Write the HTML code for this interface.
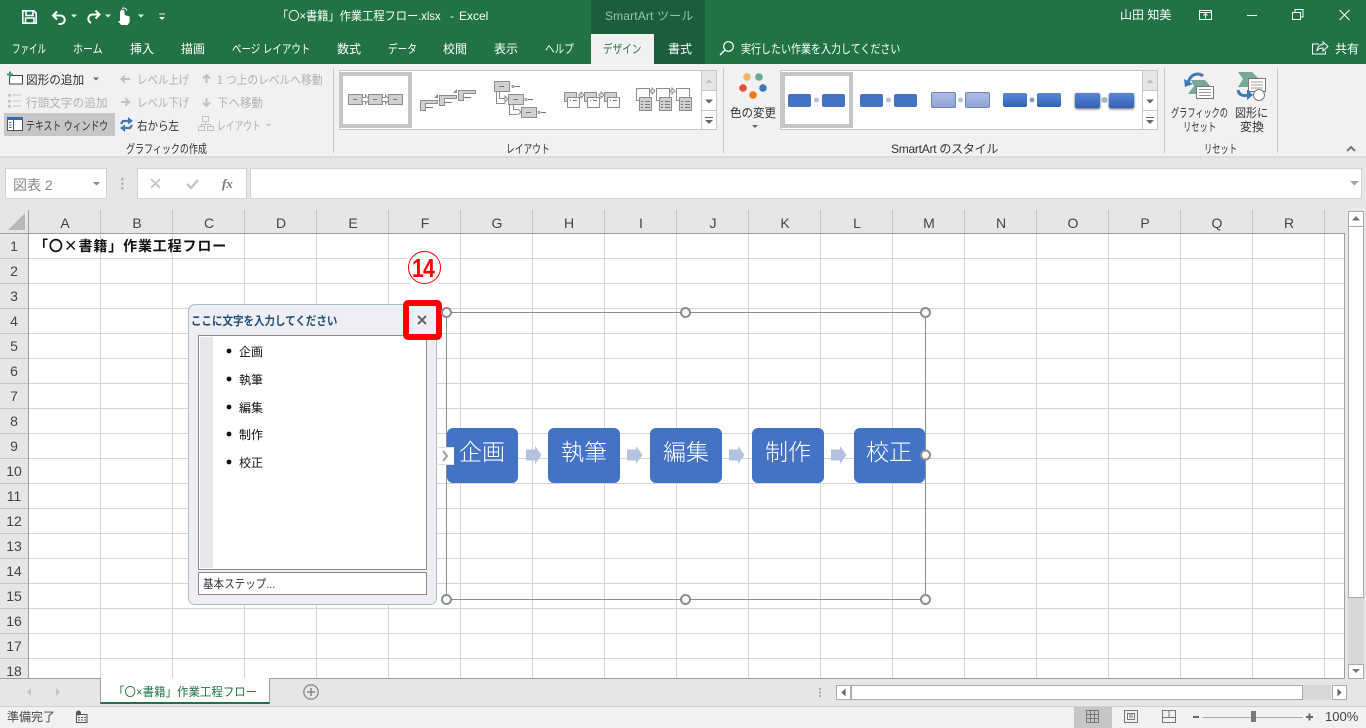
<!DOCTYPE html>
<html lang="ja"><head><meta charset="utf-8"><title>Excel</title>
<style>
html,body{margin:0;padding:0;width:1366px;height:728px;overflow:hidden;background:#e6e6e6}
body{position:relative;font-family:"Liberation Sans","Noto Sans CJK JP",sans-serif;color:#444}
.b{position:absolute;box-sizing:border-box}
.t{position:absolute;white-space:nowrap;line-height:16px;height:16px;font-size:12px;letter-spacing:0;transform-origin:0 50%}
.w{color:#fff}.g{color:#b1b1b1}.k{color:#333}
.c{transform:translateX(-50%)}
.h{position:absolute;top:213px;font-size:14px;line-height:20px;color:#444;transform:translateX(-50%)}
.r{position:absolute;left:0;width:28px;text-align:center;font-size:14px;line-height:20px;color:#444}
svg{position:absolute;left:0;top:0}
</style></head><body>

<!-- title bar / tabs -->
<div class="b" style="left:0;top:0;width:1366px;height:64px;background:#217346"></div>
<div class="b" style="left:591px;top:0;width:114px;height:64px;background:#1b5e39"></div>
<div class="b" style="left:591px;top:34px;width:63px;height:30px;background:#f1f1f1"></div>
<!-- ribbon -->
<div class="b" style="left:0;top:64px;width:1366px;height:94px;background:#f1f1f1;border-bottom:2px solid #dcdcdc"></div>
<div class="b" style="left:333px;top:68px;width:1px;height:85px;background:#c8c8c8"></div>
<div class="b" style="left:723px;top:68px;width:1px;height:85px;background:#c8c8c8"></div>
<div class="b" style="left:1164px;top:68px;width:1px;height:85px;background:#c8c8c8"></div>
<div class="b" style="left:1277px;top:68px;width:1px;height:85px;background:#c8c8c8"></div>
<div class="b" style="left:4px;top:113px;width:111px;height:23px;background:#c6c6c6"></div>
<!-- galleries -->
<div class="b" style="left:339px;top:70px;width:378px;height:60px;background:#fff;border:1px solid #c6c6c6"></div>
<div class="b" style="left:339px;top:72px;width:73px;height:56px;border:4px solid #c6c6c6"></div>
<div class="b" style="left:701px;top:70px;width:16px;height:60px;background:#fff;border:1px solid #c6c6c6"></div>
<div class="b" style="left:702px;top:71px;width:14px;height:20px;background:#e6e6e6;border-bottom:1px solid #c6c6c6"></div>
<div class="b" style="left:702px;top:110px;width:14px;height:1px;background:#c6c6c6"></div>
<div class="b" style="left:780px;top:70px;width:378px;height:60px;background:#fff;border:1px solid #c6c6c6"></div>
<div class="b" style="left:781px;top:72px;width:72px;height:56px;border:4px solid #c6c6c6"></div>
<div class="b" style="left:1142px;top:70px;width:16px;height:60px;background:#fff;border:1px solid #c6c6c6"></div>
<div class="b" style="left:1143px;top:71px;width:14px;height:20px;background:#e6e6e6;border-bottom:1px solid #c6c6c6"></div>
<div class="b" style="left:1143px;top:110px;width:14px;height:1px;background:#c6c6c6"></div>

<!-- formula bar -->
<div class="b" style="left:5px;top:168px;width:102px;height:31px;background:#fff;border:1px solid #d4d4d4"></div>
<div class="b" style="left:137px;top:168px;width:110px;height:31px;background:#fff;border:1px solid #d4d4d4"></div>
<div class="b" style="left:250px;top:168px;width:1112px;height:31px;background:#fff;border:1px solid #d4d4d4"></div>

<!-- sheet -->
<div class="b" style="left:29px;top:234px;width:1316px;height:445px;background-color:#fff;background-image:linear-gradient(to right,transparent 71px,#d4d4d4 71px),linear-gradient(to bottom,transparent 24px,#d4d4d4 24px);background-size:72px 25px"></div>
<div class="b" style="left:0;top:234px;width:29px;height:445px;background-image:linear-gradient(to bottom,transparent 24px,#c4c4c4 24px);background-size:29px 25px"></div>
<div class="b" style="left:29px;top:210px;width:1316px;height:23px;background-image:linear-gradient(to right,transparent 71px,#c4c4c4 71px);background-size:72px 23px"></div>
<div class="b" style="left:0;top:233px;width:1345px;height:1px;background:#9e9e9e"></div>
<div class="b" style="left:28px;top:210px;width:1px;height:469px;background:#9e9e9e"></div>
<div class="b" style="left:1344px;top:233px;width:1px;height:446px;background:#9e9e9e"></div>
<div class="b" style="left:0;top:678px;width:1345px;height:1px;background:#9e9e9e"></div>

<span class="h" style="left:65px">A</span><span class="h" style="left:137px">B</span><span class="h" style="left:209px">C</span><span class="h" style="left:281px">D</span><span class="h" style="left:353px">E</span><span class="h" style="left:425px">F</span><span class="h" style="left:497px">G</span><span class="h" style="left:569px">H</span><span class="h" style="left:641px">I</span><span class="h" style="left:713px">J</span><span class="h" style="left:785px">K</span><span class="h" style="left:857px">L</span><span class="h" style="left:929px">M</span><span class="h" style="left:1001px">N</span><span class="h" style="left:1073px">O</span><span class="h" style="left:1145px">P</span><span class="h" style="left:1217px">Q</span><span class="h" style="left:1289px">R</span>

<span class="r" style="top:236px">1</span><span class="r" style="top:261px">2</span><span class="r" style="top:286px">3</span><span class="r" style="top:311px">4</span><span class="r" style="top:336px">5</span><span class="r" style="top:361px">6</span><span class="r" style="top:386px">7</span><span class="r" style="top:411px">8</span><span class="r" style="top:436px">9</span><span class="r" style="top:461px">10</span><span class="r" style="top:486px">11</span><span class="r" style="top:511px">12</span><span class="r" style="top:536px">13</span><span class="r" style="top:561px">14</span><span class="r" style="top:586px">15</span><span class="r" style="top:611px">16</span><span class="r" style="top:636px">17</span><span class="r" style="top:661px">18</span>

<span class="t" style="left:34px;top:238px;font-size:14px;font-weight:700;color:#111;letter-spacing:.85px;font-family:'Noto Sans CJK JP',sans-serif">「〇×書籍」作業工程フロー</span>

<!-- smartart -->
<div class="b" style="left:446px;top:312px;width:480px;height:288px;border:1px solid #8e8e8e"></div>
<div class="b" style="left:447px;top:428px;width:71px;height:55px;background:#4472c4;border-radius:6px"></div>
<div class="b" style="left:548px;top:428px;width:72px;height:55px;background:#4472c4;border-radius:6px"></div>
<div class="b" style="left:650px;top:428px;width:72px;height:55px;background:#4472c4;border-radius:6px"></div>
<div class="b" style="left:752px;top:428px;width:72px;height:55px;background:#4472c4;border-radius:6px"></div>
<div class="b" style="left:854px;top:428px;width:71px;height:55px;background:#4472c4;border-radius:6px"></div>
<span class="t w c" style="left:482px;top:438px;font-size:23px;line-height:28px;height:28px;font-weight:300">企画</span>
<span class="t w c" style="left:584px;top:438px;font-size:23px;line-height:28px;height:28px;font-weight:300">執筆</span>
<span class="t w c" style="left:686px;top:438px;font-size:23px;line-height:28px;height:28px;font-weight:300">編集</span>
<span class="t w c" style="left:788px;top:438px;font-size:23px;line-height:28px;height:28px;font-weight:300">制作</span>
<span class="t w c" style="left:889px;top:438px;font-size:23px;line-height:28px;height:28px;font-weight:300">校正</span>

<!-- text pane -->
<div class="b" style="left:188px;top:304px;width:249px;height:301px;background:#eeeef4;border:1px solid #a9bfc2;border-radius:7px"></div>
<div class="b" style="left:198px;top:335px;width:229px;height:235px;background:#fff;border:1px solid #8a8a8a"></div>
<div class="b" style="left:200px;top:337px;width:13px;height:231px;background:#e8e8e8"></div>
<div class="b" style="left:198px;top:572px;width:229px;height:23px;background:#fff;border:1px solid #8a8a8a"></div>
<span class="t" style="left:191px;top:313px;font-weight:700;color:#1f4e79;transform:scaleX(.875)">ここに文字を入力してください</span>
<span class="t" style="left:239px;top:344px;color:#111">企画</span>
<span class="t" style="left:239px;top:372px;color:#111">執筆</span>
<span class="t" style="left:239px;top:400px;color:#111">編集</span>
<span class="t" style="left:239px;top:427px;color:#111">制作</span>
<span class="t" style="left:239px;top:455px;color:#111">校正</span>
<span class="t" style="left:203px;top:576px;color:#333;transform:scaleX(.88)">基本ステップ...</span>

<!-- annotation -->
<div class="b" style="left:403px;top:300px;width:39px;height:40px;border:6px solid #f00;border-radius:5px;background:#eeeef4"></div>
<div class="b" style="left:404px;top:248px;width:41px;height:41px;border-radius:50%;background:#fff"></div>
<div class="b" style="left:408px;top:251px;width:33px;height:33px;border-radius:50%;border:1px solid #f00"></div>
<span class="t" style="left:412px;top:254px;height:28px;line-height:28px;font-size:26px;font-weight:700;color:#f00;letter-spacing:-1px;transform:scaleX(.82)">14</span>

<!-- scroll bars -->
<div class="b" style="left:1348px;top:211px;width:16px;height:16px;background:#fff;border:1px solid #ababab"></div>
<div class="b" style="left:1348px;top:227px;width:16px;height:371px;background:#fff;border:1px solid #ababab;border-top:0"></div>
<div class="b" style="left:1348px;top:598px;width:16px;height:66px;background:#d8d8d8"></div>
<div class="b" style="left:1348px;top:664px;width:16px;height:15px;background:#fff;border:1px solid #ababab"></div>

<!-- sheet tabs -->
<div class="b" style="left:100px;top:678px;width:170px;height:26px;background:#fff;border:1px solid #9e9e9e;border-top:0;border-bottom:2px solid #217346"></div>
<div class="b" style="left:0;top:706px;width:1366px;height:22px;background:#f1f1f1;border-top:1px solid #d0d0d0"></div>
<div class="b" style="left:1074px;top:707px;width:38px;height:21px;background:#c6c6c6"></div>
<span class="t" style="left:113px;top:684px;color:#217346;transform:scaleX(.955)">「〇×書籍」作業工程フロー</span>
<div class="b" style="left:836px;top:685px;width:15px;height:15px;background:#fff;border:1px solid #ababab"></div>
<div class="b" style="left:851px;top:685px;width:452px;height:15px;background:#fff;border:1px solid #ababab"></div>
<div class="b" style="left:1303px;top:685px;width:28px;height:15px;background:#d8d8d8"></div>
<div class="b" style="left:1332px;top:685px;width:15px;height:15px;background:#fff;border:1px solid #ababab"></div>

<svg width="1366" height="728" viewBox="0 0 1366 728" fill="none">
<defs>
<linearGradient id="lg" x1="0" y1="0" x2="0" y2="1"><stop offset="0" stop-color="#adbce3"/><stop offset="1" stop-color="#8ea3d6"/></linearGradient>
<linearGradient id="dg" x1="0" y1="0" x2="0" y2="1"><stop offset="0" stop-color="#5b86d2"/><stop offset="1" stop-color="#2f62b8"/></linearGradient>
<filter id="bl" x="-20%" y="-30%" width="140%" height="160%"><feGaussianBlur stdDeviation="1.200"/></filter>
</defs>
<!-- QAT -->
<g stroke="#fff" stroke-width="1.6">
<path d="M22.800 10.800h11l2.400 2.400v10h-13.400z"/><path d="M26 11v4.500h7V11M25.500 23v-5h8.500v5"/><path d="M54 15.500h6.500a4.200 4.200 0 0 1 0 8.500h-2" stroke-width="2"/><path d="M57 11.500l-4 4 4 4" stroke-width="2"/><path d="M98.500 14.500h-6a4.200 4.200 0 0 0-4.200 4.200c0 2 1.200 3.300 2.700 4.300" stroke-width="2"/><path d="M95.500 10.500l4 4-4 4" stroke-width="2"/>
</g>
<path d="M120 21v-9a2.300 2.300 0 0 1 4.600 0v3l5 1.500v5.500l-2 3h-6.500l-3-4z" fill="#fff"/><path d="M122 8.500a3.500 3.500 0 0 1 5 2" stroke="#fff"/>
<path d="M71 14.500h6l-3 3zM105 14.500h6l-3 3zM138 14.500h6l-3 3zM159 17h6l-3 3zM159 13.500h6v1h-6z" fill="#e8f1ec"/>
<!-- window controls -->
<g stroke="#fff" stroke-width="1"><rect x="1199.500" y="10.500" width="12" height="9"/><path d="M1199.500 12.500h12M1205.500 18.500v-4.500M1203.500 15.500l2-2 2 2"/><path d="M1247 15.500h10"/><rect x="1292.500" y="12.500" width="8" height="7"/><path d="M1295 12v-2.500h8v7.500h-2.500"/><path d="M1339.500 10l10 10M1349.500 10l-10 10"/></g>
<!-- search + share -->
<circle cx="728.500" cy="46.500" r="4.800" stroke="#fff" stroke-width="1.200"/><path d="M725 50l-5 5" stroke="#fff" stroke-width="1.400"/>
<g stroke="#fff" stroke-width="1"><path d="M1319 44h-6.500v10h13v-3"/><path d="M1317 51c0-4 3-6.500 6-6.500V42l5 4.500-5 4.500v-3c-3 0-5 1-6 3z"/></g>

<!-- ribbon left icons -->
<rect x="9.500" y="75.500" width="13" height="8.500" fill="#fff" stroke="#444"/>
<path d="M7 74.500h6M10 71.500v6" stroke="#3f9c72" stroke-width="2"/>
<path d="M93 77.500h6l-3 3z" fill="#666"/>
<g fill="#c2c2c2"><rect x="8" y="94" width="3" height="2.500"/><rect x="8" y="100" width="3" height="2.500"/><rect x="8" y="105" width="3" height="2.500"/></g>
<path d="M13 95h8M13 101h8M13 106h8" stroke="#c2c2c2"/>
<rect x="7.500" y="117.500" width="15" height="13" fill="#fff" stroke="#555"/><rect x="7" y="117" width="16" height="3" fill="#2a6eb8"/><path d="M9 122.500h2.500M9 125h2.500M9 127.500h2.500" stroke="#2a6eb8"/><path d="M13.500 120v10" stroke="#555"/>
<g fill="none" stroke="#3f76b5" stroke-width="2.200"><path d="M130 121h-7l-2 3"/><path d="M123 128h7l2-3"/></g><path d="M128 117l5 4-5 3.500zM125 124.500l-5 3.500 5 4z" fill="#3f76b5"/>
<g stroke="#c2c2c2" stroke-width="2"><path d="M122 79h8M125 75.500l-3.500 3.500 3.500 3.500"/><path d="M121 102h8M125.500 98.500l3.500 3.500-3.500 3.500"/><path d="M206.500 83v-8M203 78.500l3.500-3.500 3.500 3.500"/><path d="M206.500 98v8M203 102.500l3.500 3.500 3.500-3.500"/></g>
<g stroke="#c2c2c2"><rect x="202.500" y="116.500" width="6" height="5"/><rect x="198.500" y="126.500" width="6" height="4"/><rect x="207.500" y="126.500" width="6" height="4"/><path d="M205.500 122v2.500h-4.500v2M205.500 124.500h5v2"/></g>
<path d="M266 124h5l-2.500 2.500z" fill="#c2c2c2"/>

<!-- layout gallery icons -->
<g stroke="#8c8c8c" fill="#d0d0d0">
<rect x="348.500" y="94.500" width="14" height="10"/><rect x="368.500" y="94.500" width="14" height="10"/><rect x="388.500" y="94.500" width="14" height="10"/>
<path d="M362 97.500h3.500v-2.500l3.500 4.500-3.500 4.500v-2.500h-3.500zM382 97.500h3.500v-2.500l3.500 4.500-3.500 4.500v-2.500h-3.500z" fill="#fff"/>
<path d="M420.500 110.500v-10h17v3h-12v7z"/><path d="M439.500 105.500v-10h17v3h-12v7z"/><path d="M458.500 100.500v-10h17v3h-12v7z"/>
<path d="M496.500 91v12.500h9M499.500 91v7.500h6M509.500 104v10.500h8M513.500 104v5.500h4" fill="none"/>
<rect x="494.500" y="81.500" width="15" height="10"/><rect x="508.500" y="94.500" width="15" height="10"/><rect x="521.500" y="107.500" width="15" height="10"/>
</g>
<path d="M505 96l3 3-3 3zM518 109l3 3-3 3" fill="#fff" stroke="#8c8c8c"/>
<path d="M353 99.500h4M373 99.500h4M393 99.500h4M426 107.500h7M445 102.500h7M464 97.500h7M499 86.500h5M513 99.500h5M526 112.500h5M515 86.500h5M528 99.500h5M541 112.500h5" stroke="#777"/>
<g fill="none" stroke="#8c8c8c"><circle cx="513" cy="86.500" r="1"/><circle cx="526" cy="99.500" r="1"/><circle cx="539" cy="112.500" r="1"/></g>
<path d="M434 98l4-4v4zM453 93l4-4v4z" fill="#8c8c8c"/>
<g stroke="#8c8c8c" fill="#fff">
<rect x="564.500" y="92.500" width="12" height="9" fill="#d0d0d0"/><rect x="567.500" y="97.500" width="12" height="10"/><path d="M579 94h2v-2l3 3-3 3v-2h-2z"/>
<rect x="584.500" y="92.500" width="12" height="9" fill="#d0d0d0"/><rect x="587.500" y="97.500" width="12" height="10"/><path d="M599 94h2v-2l3 3-3 3v-2h-2z"/>
<rect x="604.500" y="92.500" width="12" height="9" fill="#d0d0d0"/><rect x="607.500" y="97.500" width="12" height="10"/>
<rect x="636.500" y="88.500" width="13" height="12"/><rect x="639.500" y="97.500" width="12" height="13" fill="#d0d0d0"/><path d="M650 90h2v-2l3 3-3 3v-2h-2z"/>
<rect x="656.500" y="88.500" width="13" height="12"/><rect x="659.500" y="97.500" width="12" height="13" fill="#d0d0d0"/><path d="M670 90h2v-2l3 3-3 3v-2h-2z"/>
<rect x="676.500" y="88.500" width="13" height="12"/><rect x="679.500" y="97.500" width="12" height="13" fill="#d0d0d0"/>
</g>
<path d="M570 100.500h1M573 100.500h4M590 100.500h1M593 100.500h4M610 100.500h1M613 100.500h4" stroke="#777"/>
<path d="M641 101.500h2M645 101.500h5M641 104.500h2M645 104.500h5M641 107.500h2M645 107.500h5M661 101.500h2M665 101.500h5M661 104.500h2M665 104.500h5M661 107.500h2M665 107.500h5M681 101.500h2M685 101.500h5M681 104.500h2M685 104.500h5M681 107.500h2M685 107.500h5" stroke="#777"/>
<!-- scroll arrows gallery -->
<path d="M705.500 83l3.500-4 3.500 4zM1146.500 83l3.500-4 3.500 4z" fill="#c0c0c0"/>
<path d="M705 99.500h8l-4 4zM1146 99.500h8l-4 4zM705 120h8l-4 4zM1146 120h8l-4 4z" fill="#666"/>
<path d="M705 117.500h8M1146 117.500h8" stroke="#666"/>
<!-- colour change -->
<circle cx="747" cy="77" r="3.800" fill="#f0b565"/><circle cx="759" cy="77" r="3.800" fill="#67ab93"/><circle cx="743" cy="88" r="3.800" fill="#dd5233"/><circle cx="763" cy="88" r="3.800" fill="#3f78b4"/><circle cx="753" cy="95" r="3.800" fill="#ee7a1d"/>
<path d="M752 125h6l-3 3z" fill="#666"/>
<!-- style gallery -->
<g fill="#4472c4">
<rect x="788" y="94" width="23" height="13" rx="2"/><rect x="822" y="94" width="23" height="13" rx="2"/><rect x="860" y="94" width="23" height="13" rx="2"/><rect x="894" y="94" width="23" height="13" rx="2"/>
</g>
<rect x="931.500" y="92.500" width="24" height="15" rx="1.500" fill="url(#lg)" stroke="#7186b4"/><rect x="965.500" y="92.500" width="24" height="15" rx="1.500" fill="url(#lg)" stroke="#7186b4"/>
<rect x="1003" y="93" width="24" height="14" rx="2" fill="url(#dg)"/><rect x="1037" y="93" width="24" height="14" rx="2" fill="url(#dg)"/>
<g fill="#555" filter="url(#bl)"><rect x="1075" y="94" width="25" height="15" rx="2"/><rect x="1109" y="94" width="25" height="15" rx="2"/></g>
<rect x="1075" y="93" width="25" height="15" rx="2" fill="url(#dg)"/><rect x="1109" y="93" width="25" height="15" rx="2" fill="url(#dg)"/>
<g fill="#b4c1e2"><circle cx="816.500" cy="100" r="2.500"/><circle cx="888.500" cy="100" r="2.500"/><circle cx="960.500" cy="100" r="2.500"/><circle cx="1032" cy="100" r="2.500" fill="#7f9bd6"/><circle cx="1104.500" cy="100" r="3" fill="#a3b3d8"/></g>
<!-- reset/convert -->
<path d="M1188 94l6-8-3-6h14l6 7-7 7z" fill="#78a997"/><rect x="1196.500" y="86.500" width="17" height="12" fill="#fff" stroke="#777"/><path d="M1199 89.500h12M1199 92.500h12M1199 95.500h12" stroke="#999"/>
<path d="M1188 83c2-9 10-11 15-7" stroke="#3f78b4" stroke-width="3"/><path d="M1184 79l9 5-8 3z" fill="#3f78b4"/>
<path d="M1238 72h14l7 7-6 8h-15l5-8z" fill="#78a997"/><rect x="1248.500" y="78.500" width="17" height="13" fill="#fff" stroke="#777"/><path d="M1251 82h12M1251 85h12M1251 88h12" stroke="#999"/><circle cx="1259" cy="95" r="5.500" fill="#fff" stroke="#777"/>
<path d="M1238 90c1 6 6 6 11 5" stroke="#3f78b4" stroke-width="3"/><path d="M1247 89.500l6 5.500-6 5z" fill="#3f78b4"/>
<path d="M1347 151l4-4 4 4" stroke="#777" stroke-width="2"/>

<!-- formula icons -->
<path d="M93 182h7l-3.500 3.500z" fill="#888"/>
<g fill="#b5b5b5"><rect x="121" y="178" width="2.500" height="2.500"/><rect x="121" y="182.500" width="2.500" height="2.500"/><rect x="121" y="187" width="2.500" height="2.500"/></g>
<path d="M151 179l9 9M160 179l-9 9" stroke="#c2c2c2" stroke-width="1.600"/>
<path d="M187 184l4 4 7-8" stroke="#c2c2c2" stroke-width="2.400"/>
<path d="M1350 181h9l-4.500 4.500z" fill="#a8a8a8"/>
<!-- select all -->
<path d="M8 230h17v-17z" fill="#b8b8b8"/>
<!-- v scroll arrows -->
<path d="M1352 220.500l4-4.500 4 4.500zM1352 669h8l-4 4z" fill="#777"/>
<!-- pane x -->
<path d="M418 316l8 8M426 316l-8 8" stroke="#666" stroke-width="2"/>
<!-- bullets -->
<g fill="#111"><circle cx="229" cy="351" r="2.400"/><circle cx="229" cy="379" r="2.400"/><circle cx="229" cy="407" r="2.400"/><circle cx="229" cy="434" r="2.400"/><circle cx="229" cy="462" r="2.400"/></g>
<!-- process arrows -->
<g fill="#b4c1e2"><path d="M526 449.500h9v-3.500l6.500 9-6.500 9v-3.500h-9z"/><path d="M627 449.500h9v-3.500l6.500 9-6.500 9v-3.500h-9z"/><path d="M729 449.500h9v-3.500l6.500 9-6.500 9v-3.500h-9z"/><path d="M831 449.500h9v-3.500l6.500 9-6.500 9v-3.500h-9z"/></g>
<!-- expand tab -->
<rect x="438" y="447" width="16" height="18" fill="#fff"/><path d="M438 447.500h15M438 464.500h15" stroke="#e0e0e0"/><path d="M443 451l4 5-4 5" stroke="#a0a0a0" stroke-width="2"/>
<!-- handles -->
<g fill="#fff" stroke="#8e8e8e" stroke-width="2"><circle cx="446.500" cy="312.500" r="4.500"/><circle cx="685.500" cy="312.500" r="4.500"/><circle cx="925.500" cy="312.500" r="4.500"/><circle cx="925.500" cy="455" r="4.500"/><circle cx="446.500" cy="599.500" r="4.500"/><circle cx="685.500" cy="599.500" r="4.500"/><circle cx="925.500" cy="599.500" r="4.500"/></g>
<!-- sheet nav -->
<path d="M31 688v8l-4-4zM56 688v8l4-4z" fill="#c6c6c6"/>
<circle cx="311" cy="692" r="7.200" stroke="#8a8a8a" stroke-width="1.300"/><path d="M307 692h8M311 688v8" stroke="#8a8a8a" stroke-width="1.600"/>
<g fill="#aaa"><rect x="819" y="688" width="2" height="2"/><rect x="819" y="691.500" width="2" height="2"/><rect x="819" y="695" width="2" height="2"/></g>
<path d="M845.500 688.500v8l-4-4zM1337.500 688.500v8l4-4z" fill="#666"/>
<!-- status -->
<circle cx="78.500" cy="713" r="2.500" fill="#555"/><path d="M76.500 714.500h10.500v8H76.500z" stroke="#555"/><path d="M78 717.500h8M78 720h8" stroke="#555" stroke-dasharray="2 1"/>
<g stroke="#777"><rect x="1086.500" y="710.500" width="12" height="12"/><path d="M1086.500 714.500h12M1086.500 718.500h12M1090.500 710.500v12M1094.500 710.500v12"/><rect x="1124.500" y="710.500" width="13" height="12"/><rect x="1127.500" y="713.500" width="7" height="6"/><path d="M1129 715h4M1129 717h4"/><rect x="1162.500" y="710.500" width="13" height="12"/><path d="M1162.500 717.500h13M1169 710.500v7"/></g>
<path d="M1193 717h6M1306 717h7M1309.500 713.500v7" stroke="#666" stroke-width="2"/>
<path d="M1203 717.500h100" stroke="#a8a8a8"/><rect x="1251" y="711" width="5" height="11" fill="#777"/>
</svg>

<!-- top texts -->
<span class="t w" style="left:277px;top:8px;transform:scaleX(.935)">「〇×書籍」作業工程フロー.xlsx</span>
<span class="t w" style="left:450px;top:8px">-</span>
<span class="t w" style="left:459px;top:8px">Excel</span>
<span class="t" style="left:605px;top:8px;color:#9cc3ad;letter-spacing:.15px">SmartArt ツール</span>
<span class="t w" style="left:1120px;top:7px">山田 知美</span>
<span class="t w" style="left:12px;top:41px;transform:scaleX(.71)">ファイル</span>
<span class="t w" style="left:73px;top:41px;transform:scaleX(.83)">ホーム</span>
<span class="t w" style="left:130px;top:41px">挿入</span>
<span class="t w" style="left:181px;top:41px">描画</span>
<span class="t w" style="left:232px;top:41px;transform:scaleX(.79)">ページ レイアウト</span>
<span class="t w" style="left:337px;top:41px">数式</span>
<span class="t w" style="left:388px;top:41px;transform:scaleX(.8)">データ</span>
<span class="t w" style="left:443px;top:41px">校閲</span>
<span class="t w" style="left:494px;top:41px">表示</span>
<span class="t w" style="left:545px;top:41px;transform:scaleX(.8)">ヘルプ</span>
<span class="t" style="left:603px;top:41px;color:#217346;transform:scaleX(.8)">デザイン</span>
<span class="t w" style="left:668px;top:41px">書式</span>
<span class="t w" style="left:741px;top:41px;transform:scaleX(.833)">実行したい作業を入力してください</span>
<span class="t w" style="left:1335px;top:41px">共有</span>

<!-- ribbon texts -->
<span class="t k" style="left:26px;top:72px;transform:scaleX(.97)">図形の追加</span>
<span class="t g" style="left:26px;top:95px;transform:scaleX(.97)">行頭文字の追加</span>
<span class="t k" style="left:26px;top:118px;transform:scaleX(.74)">テキスト ウィンドウ</span>
<span class="t g" style="left:137px;top:72px;transform:scaleX(.87)">レベル上げ</span>
<span class="t g" style="left:137px;top:95px;transform:scaleX(.87)">レベル下げ</span>
<span class="t k" style="left:137px;top:118px;transform:scaleX(.875)">右から左</span>
<span class="t g" style="left:217px;top:72px;transform:scaleX(.895)">1 つ上のレベルへ移動</span>
<span class="t g" style="left:217px;top:95px;transform:scaleX(.96)">下へ移動</span>
<span class="t g" style="left:217px;top:118px;transform:scaleX(.73)">レイアウト</span>
<span class="t k" style="left:126px;top:141px;transform:scaleX(.75)">グラフィックの作成</span>
<span class="t k" style="left:506px;top:141px;transform:scaleX(.73)">レイアウト</span>
<span class="t k" style="left:730px;top:105px;transform:scaleX(.96)">色の変更</span>
<span class="t k" style="left:891px;top:141px;letter-spacing:-.25px">SmartArt のスタイル</span>
<span class="t k" style="left:1171px;top:105px;transform:scaleX(.68)">グラフィックの</span>
<span class="t k" style="left:1183px;top:119px;transform:scaleX(.69)">リセット</span>
<span class="t k" style="left:1235px;top:105px;transform:scaleX(.92)">図形に</span>
<span class="t k" style="left:1240px;top:119px">変換</span>
<span class="t k" style="left:1204px;top:141px;transform:scaleX(.69)">リセット</span>

<span class="t" style="left:13px;top:177px;font-size:14px;color:#888">図表 2</span>
<span class="t" style="left:222px;top:176px;font-family:'Liberation Serif',serif;font-style:italic;font-weight:700;font-size:13px;color:#777">fx</span>
<span class="t" style="left:7px;top:709px;color:#444">準備完了</span>
<span class="t" style="left:1325px;top:709px;font-size:13px;color:#444">100%</span>
</body></html>
